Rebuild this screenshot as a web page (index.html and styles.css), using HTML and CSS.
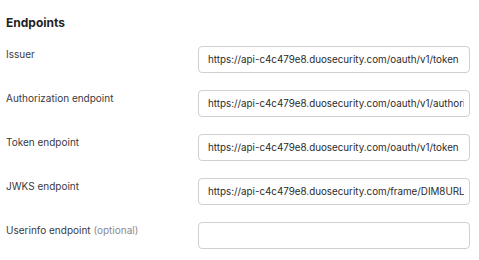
FILE: index.html
```html
<!DOCTYPE html>
<html lang="en">
<head>
  <meta charset="UTF-8" />
  <meta name="viewport" content="width=device-width, initial-scale=1.0" />
  <title>Endpoints</title>
  <link rel="stylesheet" href="styles.css">
</head>
<body>
  <section class="endpoints">
    <h2 class="section-title">Endpoints</h2>

    <div class="field-list">
      <label class="field-label" for="issuer">Issuer</label>
      <input id="issuer" class="field-input" type="text" value="https://api-c4c479e8.duosecurity.com/oauth/v1/token" readonly>

      <label class="field-label" for="authEndpoint">Authorization endpoint</label>
      <input id="authEndpoint" class="field-input" type="text" value="https://api-c4c479e8.duosecurity.com/oauth/v1/authorize" readonly>

      <label class="field-label" for="tokenEndpoint">Token endpoint</label>
      <input id="tokenEndpoint" class="field-input" type="text" value="https://api-c4c479e8.duosecurity.com/oauth/v1/token" readonly>

      <label class="field-label" for="jwksEndpoint">JWKS endpoint</label>
      <input id="jwksEndpoint" class="field-input" type="text" value="https://api-c4c479e8.duosecurity.com/frame/DIM8URLJWKS" readonly>

      <label class="field-label" for="userinfoEndpoint">Userinfo endpoint <span class="optional">(optional)</span></label>
      <input id="userinfoEndpoint" class="field-input" type="text" value="">
    </div>
  </section>
</body>
</html>
```

FILE: styles.css
```css
/* ===== page ===== */
body {
  margin: 0;
  padding: 0;
  font-family: "Inter", "Noto Sans", sans-serif;
  background-color: #fff;
  color: #2b2b2b;
}

.endpoints {
  padding: 15px 6px 0 6px;
}

.section-title {
  margin: 0 0 15px 0;
  font-size: 12px;
  font-weight: 700;
  line-height: 16px;
  color: #1f1f24;
}

/* label column + input column */
.field-list {
  display: grid;
  grid-template-columns: 192px 272px;
  row-gap: 17px;
  align-items: start;
}

.field-label {
  font-size: 10px;
  line-height: 16px;
  color: #3a3a3f;
}
.optional {
  color: #8a8a90;
}

/* long urls get cut off close to the border */
.field-input {
  box-sizing: border-box;
  width: 272px;
  height: 27px;
  margin: 0;
  padding: 0 5px 0 9px;
  border: 1px solid #cfcfd4;
  border-radius: 4px;
  font-family: inherit;
  font-size: 9.8px;
  color: #2b2b2b;
  background-color: #fff;
  outline: none;
}
```
